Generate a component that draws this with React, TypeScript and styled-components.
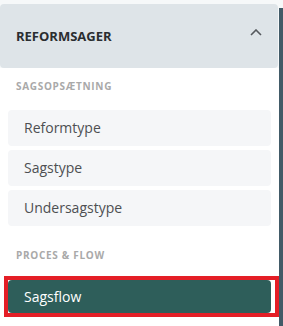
import styled, { createGlobalStyle } from 'styled-components';

const GlobalStyle = createGlobalStyle`
  html, body {
    margin: 0;
    padding: 0;
    background: #f6f8f9;
  }

  body {
    font-family: 'Open Sans', 'Noto Sans', sans-serif;
  }
`;

const Page = styled.div`
  display: flex;
  width: 283px;
  height: 326px;
  overflow: hidden;
`;

const Sidebar = styled.nav`
  display: flex;
  flex-direction: column;
  width: 279px;
  padding-top: 4px;
  box-sizing: border-box;
`;

const Scrollbar = styled.div`
  width: 4px;
  margin-top: 8px;
  background: #425b68;
`;

const Header = styled.div`
  display: flex;
  align-items: center;
  justify-content: space-between;
  height: 64px;
  margin-right: 1px;
  padding: 0 16px;
  box-sizing: border-box;
  background: #dee4e8;
  border-radius: 4px;
`;

const HeaderTitle = styled.span`
  font-size: 13px;
  font-weight: 700;
  color: #2a2d30;
  margin-top: -1px;
`;

const Chevron = styled.svg`
  display: block;
  margin-bottom: 8px;
`;

const Body = styled.div`
  flex: 1;
  display: flex;
  flex-direction: column;
  background: #ffffff;
  padding-top: 4px;
`;

const SectionLabel = styled.div<{ $top: number; $bottom: number }>`
  height: 14px;
  line-height: 14px;
  margin: ${(p) => p.$top}px 0 ${(p) => p.$bottom}px 16px;
  font-size: 10px;
  font-weight: 700;
  letter-spacing: 0.7px;
  color: #a9a9a9;
`;

const ItemList = styled.div`
  display: flex;
  flex-direction: column;
  gap: 4px;
  padding: 0 8px;
`;

const Item = styled.div<{ $active?: boolean }>`
  height: ${(p) => (p.$active ? 33 : 36)}px;
  line-height: ${(p) => (p.$active ? 33 : 36)}px;
  width: 263px;
  padding-left: 16px;
  box-sizing: border-box;
  border-radius: 4px;
  font-size: 14px;
  color: ${(p) => (p.$active ? '#ffffff' : '#4d4f52')};
  background: ${(p) => (p.$active ? '#2e5e5a' : '#f5f6f8')};
`;

const Highlight = styled.div`
  width: 275px;
  margin-left: 4px;
  border: 4px solid #e41e26;
  box-sizing: border-box;
  background: #ffffff;
`;

const setupItems = ['Reformtype', 'Sagstype', 'Undersagstype'];

const App = () => {
  return (
    <>
      <GlobalStyle />
      <Page>
        <Sidebar>
          <Header>
            <HeaderTitle>REFORMSAGER</HeaderTitle>
            <Chevron width="12" height="7" viewBox="0 0 12 7">
              <polyline points="1,6 6,1 11,6" fill="none" stroke="#55595d" strokeWidth="1.6" />
            </Chevron>
          </Header>
          <Body>
            <SectionLabel $top={7} $bottom={17}>SAGSOPSÆTNING</SectionLabel>
            <ItemList>
              {setupItems.map((label) => (
                <Item key={label}>{label}</Item>
              ))}
            </ItemList>
            <SectionLabel $top={22} $bottom={14}>PROCES &amp; FLOW</SectionLabel>
            <Highlight>
              <Item $active>Sagsflow</Item>
            </Highlight>
          </Body>
        </Sidebar>
        <Scrollbar />
      </Page>
    </>
  );
};

export default App;
